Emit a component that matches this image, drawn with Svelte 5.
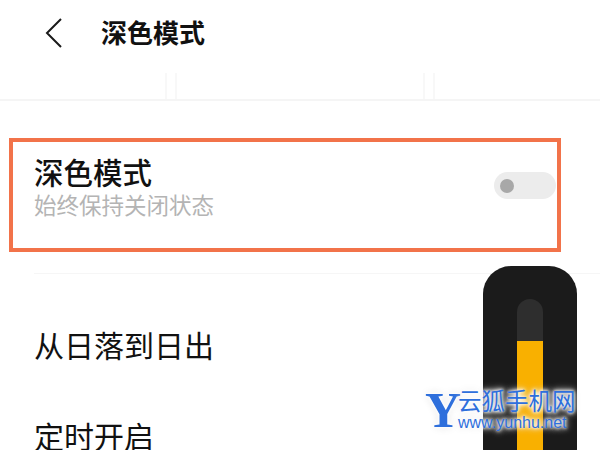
<script lang="ts">
  let darkMode = $state(false);
  const cjk = "深色模式";
</script>

<main class="page">
  <header class="header">
    <svg class="back" width="20" height="34" viewBox="0 0 20 34" aria-label="返回">
      <path d="M17 3 L3 17 L17 31" fill="none" stroke="#1a1a1a" stroke-width="2" />
    </svg>
    <h1>{cjk}</h1>
  </header>

  <div class="strip">
    <span class="sep"></span>
    <span class="sep"></span>
  </div>

  <section class="highlight">
    <div class="labels">
      <div class="name">{cjk}</div>
      <div class="hint">始终保持关闭状态</div>
    </div>
    <button class="toggle" class:on={darkMode} aria-label="切换深色模式" onclick={() => (darkMode = !darkMode)}>
      <span class="knob"></span>
    </button>
  </section>

  <div class="rule"></div>

  <div class="row first">从日落到日出</div>
  <div class="row">定时开启</div>

  <div class="slider">
    <div class="track"><div class="fill"></div></div>
  </div>

  <div class="mark">
    <span class="y">Y</span>
    <div class="mark-text">
      <div class="mark-cn">云狐手机网</div>
      <div class="mark-url">www.yunhu.net</div>
    </div>
  </div>
</main>

<style>
  :global(body) {
    margin: 0;
    background: #fff;
  }

  .page {
    position: relative;
    width: 600px;
    height: 450px;
    overflow: hidden;
    background: #fff;
    font-family: "Noto Sans CJK SC", "Liberation Sans", sans-serif;
    color: #111;
  }

  .header {
    display: flex;
    align-items: center;
    height: 66px;
    padding-left: 44px;
  }

  .back {
    flex-shrink: 0;
    margin-right: 37px;
  }

  .header h1 {
    margin: -3px 0 0;
    font-size: 26px;
    font-weight: 700;
    line-height: 1;
  }

  .strip {
    display: flex;
    gap: 246px;
    height: 33px;
    padding-left: 165px;
    border-bottom: 2px solid #f5f5f5;
  }

  .sep {
    width: 8px;
    margin-top: 7px;
    border-left: 2px solid #f8f8f8;
    border-right: 2px solid #f8f8f8;
  }

  .highlight {
    display: flex;
    align-items: flex-start;
    justify-content: space-between;
    box-sizing: border-box;
    width: 552px;
    height: 114px;
    margin: 37px 0 0 9px;
    padding: 11px 1px 0 21px;
    border: 4.5px solid #f2734a;
  }

  .name {
    font-size: 29.5px;
    font-weight: 500;
    line-height: 36px;
  }

  .hint {
    font-size: 22.5px;
    line-height: 30px;
    color: #b4b4b4;
  }

  .toggle {
    display: flex;
    align-items: center;
    width: 62px;
    height: 27px;
    margin-top: 19px;
    padding: 0 0 0 6px;
    border: none;
    border-radius: 14px;
    background: #ececec;
    cursor: pointer;
  }

  .toggle.on {
    justify-content: flex-end;
    padding: 0 6px 0 0;
    background: #f5b000;
  }

  .knob {
    width: 14px;
    height: 14px;
    border-radius: 50%;
    background: #a8a8a8;
  }

  .rule {
    height: 1px;
    margin: 21px 0 0 34px;
    background: #f6f6f6;
  }

  .row {
    padding-left: 34px;
    font-size: 30px;
    line-height: 40px;
  }

  .row.first {
    margin-top: 50px;
  }

  .row + .row {
    margin-top: 51px;
  }

  .slider {
    position: absolute;
    left: 483px;
    top: 266px;
    width: 94px;
    height: 210px;
    padding-top: 33px;
    box-sizing: border-box;
    border-radius: 28px;
    background: #1b1b1b;
  }

  .track {
    width: 26px;
    height: 170px;
    margin: 0 auto;
    padding-top: 42px;
    box-sizing: border-box;
    border-radius: 13px 13px 0 0;
    background: #2e2e2e;
  }

  .fill {
    height: 128px;
    background: #f9b000;
  }

  .mark {
    position: absolute;
    left: 425px;
    top: 386px;
    display: flex;
    gap: 0;
    color: #2e6fdc;
    text-shadow: 0 0 3px #fff, 0 0 4px #fff, 0 0 6px #fff, 0 0 8px #ddd;
  }

  .y {
    width: 33px;
    font-family: "Liberation Serif", serif;
    font-size: 50px;
    font-weight: 700;
    line-height: 48px;
  }

  .mark-cn {
    font-size: 23.5px;
    line-height: 29px;
    white-space: nowrap;
  }

  .mark-url {
    font-family: "Liberation Sans", sans-serif;
    font-size: 16px;
    line-height: 16px;
    white-space: nowrap;
  }
</style>
